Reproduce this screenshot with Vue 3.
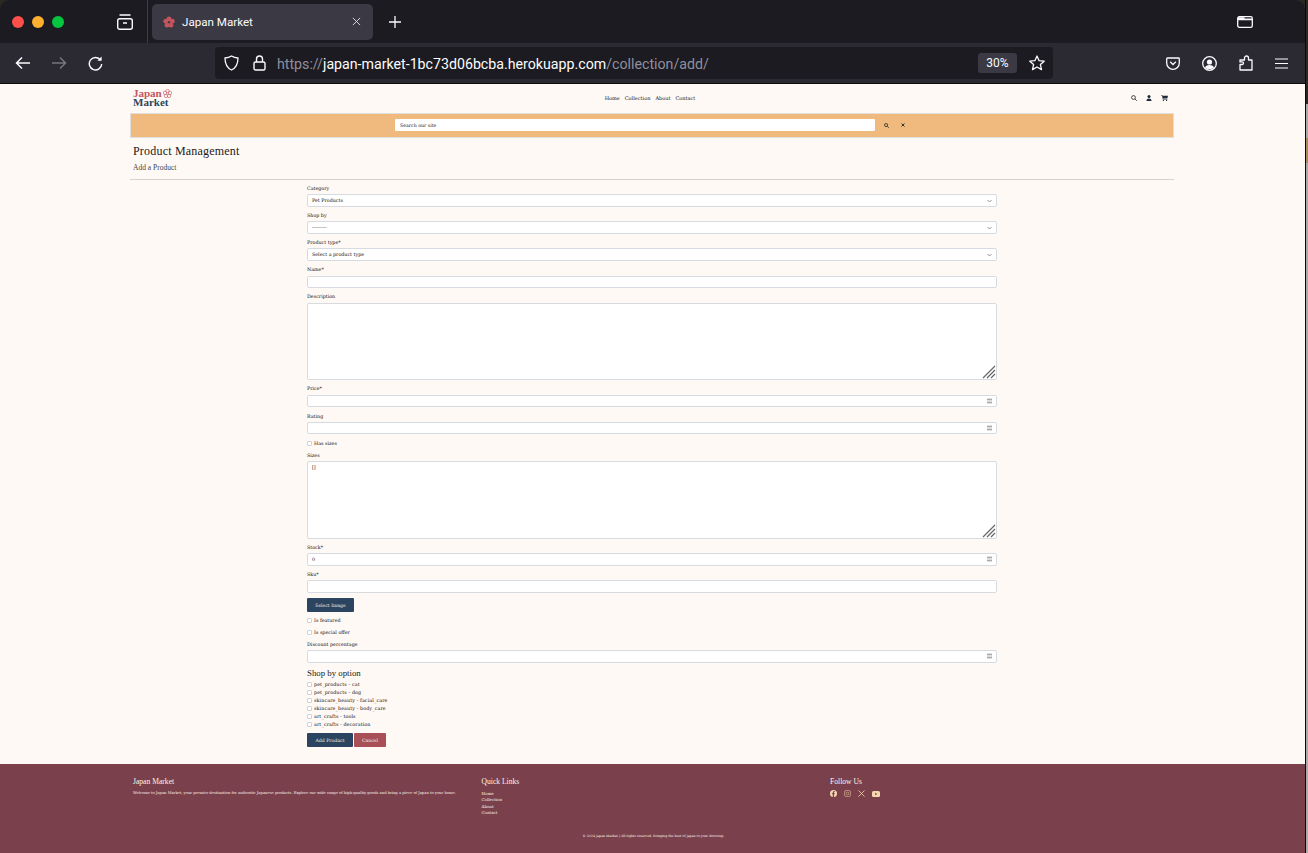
<script setup>
const selects = [
  { label: 'Category', value: 'Pet Products' },
  { label: 'Shop by', value: '---------' },
  { label: 'Product type*', value: 'Select a product type' },
]
const shopOptions = [
  'pet_products - cat',
  'pet_products - dog',
  'skincare_beauty - facial_care',
  'skincare_beauty - body_care',
  'art_crafts - tools',
  'art_crafts - decoration',
]
const navLinks = ['Home', 'Collection', 'About', 'Contact']
</script>

<template>
  <div class="desk">
    <div class="window">
      <header class="browser">
        <div class="tabbar">
          <div class="lights">
            <span class="light red" />
            <span class="light yellow" />
            <span class="light green" />
          </div>
          <svg class="ff-view" width="16" height="16" viewBox="0 0 16 16" fill="none" stroke="#fbfbfe" stroke-width="1.4">
            <rect x="0.7" y="4.7" width="14.6" height="10.6" rx="2" />
            <path d="M2.5 1h11M6 9h4" />
          </svg>
          <span class="tab-sep" />
          <div class="tab">
            <svg class="favicon" width="12" height="12" viewBox="0 0 12 12" fill="#c4555e">
              <circle cx="6" cy="2.8" r="2.4" />
              <circle cx="2.7" cy="5.2" r="2.4" />
              <circle cx="9.3" cy="5.2" r="2.4" />
              <circle cx="4" cy="9.2" r="2.4" />
              <circle cx="8" cy="9.2" r="2.4" />
            </svg>
            <span class="tab-title">Japan Market</span>
            <svg class="tab-close" width="9" height="9" viewBox="0 0 10 10" stroke="#e4e4ea" stroke-width="1">
              <path d="M1 1l8 8M9 1l-8 8" />
            </svg>
          </div>
          <svg class="new-tab" width="12" height="12" viewBox="0 0 12 12" stroke="#fbfbfe" stroke-width="1.3">
            <path d="M6 0v12M0 6h12" />
          </svg>
          <svg class="tab-list" width="16" height="12" viewBox="0 0 16 12" fill="none" stroke="#fbfbfe" stroke-width="1.3">
            <rect x="0.7" y="0.7" width="14.6" height="10.6" rx="1.6" />
            <path d="M1 2h6.5M1 3.4h14" stroke-width="1.6" />
          </svg>
        </div>
        <div class="toolbar">
          <svg class="tool-back" width="16" height="14" viewBox="0 0 16 14" fill="none" stroke="#fbfbfe" stroke-width="1.5">
            <path d="M15 7H1.5M7 1.5L1.5 7 7 12.5" />
          </svg>
          <svg class="tool-forward" width="16" height="14" viewBox="0 0 16 14" fill="none" stroke="#77767d" stroke-width="1.5">
            <path d="M1 7h13.5M9 1.5L14.5 7 9 12.5" />
          </svg>
          <svg class="tool-reload" width="15" height="15" viewBox="0 0 15 15" fill="none" stroke="#fbfbfe" stroke-width="1.4">
            <path d="M12.6 4.2A6.2 6.2 0 1 0 13.7 8" />
            <path d="M13.6 0.6v4.2H9.4" fill="#fbfbfe" stroke="none" />
          </svg>
          <div class="urlbar">
            <svg class="url-shield" width="15" height="16" viewBox="0 0 15 16" fill="none" stroke="#fbfbfe" stroke-width="1.3">
              <path d="M7.5 1C5.5 2.3 3.2 2.9 1 3c0 5 1 9.4 6.5 12C13 12.4 14 8 14 3c-2.2-.1-4.5-.7-6.5-2z" />
            </svg>
            <svg class="url-lock" width="13" height="16" viewBox="0 0 13 16" fill="none" stroke="#fbfbfe" stroke-width="1.4">
              <rect x="1" y="7" width="11" height="8" rx="1.5" />
              <path d="M3.5 7V4a3 3 0 0 1 6 0v3" />
            </svg>
            <span class="url-text"><span class="dim">https://</span>japan-market-1bc73d06bcba.herokuapp.com<span class="dim">/collection/add/</span></span>
            <span class="zoom-badge">30%</span>
            <svg class="url-star" width="16" height="16" viewBox="0 0 16 16" fill="none" stroke="#fbfbfe" stroke-width="1.3" stroke-linejoin="round">
              <path d="M8 1l2.1 4.7 5.1.5-3.8 3.4 1.1 5L8 12l-4.500 2.6 1.1-5L.8 6.200l5.100-.5z" />
            </svg>
          </div>
          <div class="tool-right">
            <svg width="14" height="13" viewBox="0 0 14 13" fill="none" stroke="#fbfbfe" stroke-width="1.3">
              <path d="M1.5 1h11c.4 0 .8.4.8.8V6a6.300 6.300 0 0 1-12.600 0V1.800c0-.4.400-.8.800-.8z" />
              <path d="M4.200 4.800L7 7.500l2.800-2.700" />
            </svg>
            <svg width="15" height="15" viewBox="0 0 15 15" fill="none" stroke="#fbfbfe" stroke-width="1.3">
              <circle cx="7.5" cy="7.5" r="6.8" />
              <circle cx="7.5" cy="6" r="2.6" fill="#fbfbfe" stroke="none" />
              <path d="M3 11.500c1-1.800 2.500-2.500 4.500-2.500s3.500.7 4.500 2.500c-1.200 1.200-2.700 1.800-4.500 1.800S4.200 12.700 3 11.500z" fill="#fbfbfe" stroke="none" />
            </svg>
            <svg width="14" height="16" viewBox="0 0 14 16" fill="none" stroke="#fbfbfe" stroke-width="1.3" stroke-linejoin="round">
              <path d="M1 15V9.500h2.200a1.300 1.300 0 1 0 0-2.600H1V5h4.500V3a2 2 0 0 1 4 0v2H13v10z" />
            </svg>
            <svg width="13" height="11" viewBox="0 0 13 11" stroke="#fbfbfe" stroke-width="1.2">
              <path d="M0 1h13M0 5.500h13M0 10h13" />
            </svg>
          </div>
        </div>
      </header>

      <main class="page">
        <div class="container">
          <nav class="site-nav">
            <div class="logo">
              <div class="logo-top">
                <span>Japan</span>
                <svg width="9" height="9" viewBox="0 0 12 12" fill="none" stroke="#c4555e" stroke-width="0.8">
                  <circle cx="6" cy="2.8" r="2.3" />
                  <circle cx="2.7" cy="5.2" r="2.3" />
                  <circle cx="9.3" cy="5.2" r="2.3" />
                  <circle cx="4" cy="9.2" r="2.3" />
                  <circle cx="8" cy="9.2" r="2.3" />
                </svg>
              </div>
              <div class="logo-bottom">Market</div>
            </div>
            <ul class="nav-links">
              <li v-for="link in navLinks" :key="link">{{ link }}</li>
            </ul>
            <div class="nav-icons">
              <svg width="6" height="6" viewBox="0 0 6 6" fill="none" stroke="#333" stroke-width="0.9">
                <circle cx="2.5" cy="2.5" r="1.9" />
                <path d="M3.9 3.9L5.8 5.8" />
              </svg>
              <svg width="6" height="6" viewBox="0 0 6 6" fill="#1f2a37">
                <circle cx="3" cy="1.6" r="1.5" />
                <path d="M0.4 6c0-1.6 1.1-2.5 2.6-2.5S5.6 4.4 5.6 6z" />
              </svg>
              <svg width="7" height="6" viewBox="0 0 7 6" fill="#1f2a37">
                <path d="M0 0h1.3l.2.7H7l-.7 2.8H2.2l.1.6h4v.5H1.800L1 .5H0z" />
                <circle cx="2.4" cy="5.4" r="0.6" />
                <circle cx="5.6" cy="5.4" r="0.6" />
              </svg>
            </div>
          </nav>

          <div class="search-band">
            <input class="search-input" placeholder="Search our site" />
            <svg class="band-icon" width="5" height="5" viewBox="0 0 6 6" fill="none" stroke="#333" stroke-width="1">
              <circle cx="2.5" cy="2.5" r="1.9" />
              <path d="M3.9 3.9L5.8 5.8" />
            </svg>
            <svg class="band-close" width="4" height="4" viewBox="0 0 4 4" stroke="#333" stroke-width="1">
              <path d="M.5.5l3 3M3.5.5l-3 3" />
            </svg>
          </div>

          <section class="heading">
            <h1>Product Management</h1>
            <h2>Add a Product</h2>
          </section>
          <hr class="rule" />

          <form class="product-form" @submit.prevent>
            <div v-for="s in selects" :key="s.label" class="field">
              <label>{{ s.label }}</label>
              <div class="select-box">
                <span>{{ s.value }}</span>
                <svg width="5" height="4" viewBox="0 0 5 4" fill="none" stroke="#666" stroke-width="0.7">
                  <path d="M.5 1l2 2 2-2" />
                </svg>
              </div>
            </div>

            <div class="field gap3">
              <label>Name*</label>
              <input class="text-input" type="text" />
            </div>

            <div class="field gap3">
              <label>Description</label>
              <div class="area-wrap">
                <textarea class="text-area" />
                <svg class="grip" width="14" height="14" viewBox="0 0 14 14" stroke="#666" stroke-width="1.2">
                  <path d="M1 13L13 1M5 13l8-8M9 13l4-4" />
                </svg>
              </div>
            </div>

            <div class="field gap3 wide-after">
              <label>Price*</label>
              <div class="num-wrap"><input class="text-input" type="text" /><span class="spin" /></div>
            </div>

            <div class="field">
              <label>Rating</label>
              <div class="num-wrap"><input class="text-input" type="text" /><span class="spin" /></div>
            </div>

            <label class="check check-sizes"><span class="box" />Has sizes</label>

            <div class="field">
              <label>Sizes</label>
              <div class="area-wrap">
                <textarea class="text-area sizes">[]</textarea>
                <svg class="grip" width="14" height="14" viewBox="0 0 14 14" stroke="#666" stroke-width="1.2">
                  <path d="M1 13L13 1M5 13l8-8M9 13l4-4" />
                </svg>
              </div>
            </div>

            <div class="field">
              <label>Stock*</label>
              <div class="num-wrap"><input class="text-input tall" type="text" value="0" /><span class="spin" /></div>
            </div>

            <div class="field">
              <label>Sku*</label>
              <input class="text-input tall" type="text" />
            </div>

            <button type="button" class="btn btn-navy btn-image">Select Image</button>

            <label class="check check-feat"><span class="box" />Is featured</label>
            <label class="check check-offer"><span class="box" />Is special offer</label>

            <div class="field field-discount">
              <label>Discount percentage</label>
              <div class="num-wrap"><input class="text-input tall" type="text" /><span class="spin" /></div>
            </div>

            <h3 class="options-title">Shop by option</h3>
            <div class="options">
              <label v-for="o in shopOptions" :key="o" class="check"><span class="box" />{{ o }}</label>
            </div>

            <div class="actions">
              <button type="button" class="btn btn-navy btn-add">Add Product</button>
              <button type="button" class="btn btn-cancel">Cancel</button>
            </div>
          </form>
        </div>

        <footer class="site-footer">
          <div class="footer-cols">
            <div class="col">
              <h4>Japan Market</h4>
              <p>Welcome to Japan Market, your premier destination for authentic Japanese products. Explore our wide range of high-quality goods and bring a piece of Japan to your home.</p>
            </div>
            <div class="col">
              <h4>Quick Links</h4>
              <ul>
                <li>Home</li>
                <li>Collection</li>
                <li>About</li>
                <li>Contact</li>
              </ul>
            </div>
            <div class="col">
              <h4>Follow Us</h4>
              <div class="socials">
                <svg width="7" height="7" viewBox="0 0 8 8">
                  <circle cx="4" cy="4" r="4" fill="#f6d9b0" />
                  <path d="M4.5 8V4.8h1l.2-1.2H4.500V3c0-.4.200-.6.600-.6h.6V1.400C5.400 1.300 5 1.300 4.700 1.300c-1 0-1.500.6-1.500 1.500v.8h-1v1.200h1V8z" fill="#7a404b" />
                </svg>
                <svg width="7" height="7" viewBox="0 0 8 8" fill="none" stroke="#d9b394" stroke-width="0.8">
                  <rect x="0.5" y="0.5" width="7" height="7" rx="2" />
                  <circle cx="4" cy="4" r="1.6" />
                </svg>
                <svg width="7" height="7" viewBox="0 0 8 8" fill="none" stroke="#f6d9b0" stroke-width="0.9">
                  <path d="M.5.5l7 7M7.5.5l-7 7" />
                </svg>
                <svg width="8" height="6" viewBox="0 0 8 6">
                  <rect width="8" height="6" rx="1.5" fill="#f6d9b0" />
                  <path d="M3.2 1.7L5.3 3 3.2 4.3z" fill="#7a404b" />
                </svg>
              </div>
            </div>
          </div>
          <p class="copyright">© 2024 Japan Market | All rights reserved. Bringing the best of Japan to your doorstep.</p>
        </footer>
      </main>
    </div>
  </div>
</template>

<style>
html, body {
  margin: 0;
  background: #aaa;
}
</style>

<style scoped>
.desk {
  width: 1308px;
  height: 853px;
  overflow: hidden;
  background: linear-gradient(#2a2820 0 104px, #a8a8a8 104px 138px, #a88a58 138px 163px, #aaa 163px);
}
.window {
  width: 1305px;
  height: 853px;
  border-right: 1px solid #0a0a0a;
  font-family: "DejaVu Serif", serif;
}

/* browser chrome */
.browser { height: 84px; font-family: "Roboto", "Liberation Sans", sans-serif; }
.tabbar {
  height: 43px; display: flex; align-items: center;
  background: #1c1b22; border-radius: 10px 10px 0 0;
}
.lights { display: flex; gap: 8px; margin-left: 12px; }
.light { width: 12px; height: 12px; border-radius: 50%; }
.red { background: #ff4f4b; }
.yellow { background: #ffb02e; }
.green { background: #04c63f; }
.ff-view { margin-left: 53px; }
.tab-sep { width: 1px; height: 43px; background: #3f3e46; margin-left: 14px; }
.tab {
  width: 221px; height: 36px; margin-left: 4px; padding: 0 12px 0 11px;
  box-sizing: border-box; background: #3a3944; border-radius: 5px;
  display: flex; align-items: center; color: #fbfbfe; font-size: 11.6px;
}
.tab-title { margin-left: 7px; flex: 1; }
.new-tab { margin-left: 16px; }
.tab-list { margin-left: auto; margin-right: 52px; }
.toolbar {
  height: 40px; display: flex; align-items: center;
  background: #2b2a33; border-bottom: 1px solid #0c0c0d;
}
.tool-back { margin-left: 15px; }
.tool-forward { margin-left: 20px; }
.tool-reload { margin-left: 21px; }
.urlbar {
  width: 838px; height: 32px; margin-left: 112px; border-radius: 4px; background: #1c1b22;
  display: flex; align-items: center;
}
.url-shield { margin-left: 9px; }
.url-lock { margin-left: 14px; }
.url-text { margin: 2px 0 0 11px; font-size: 14.2px; color: #fbfbfe; white-space: nowrap; flex: 1; }
.dim { color: #8f8f9d; }
.zoom-badge {
  width: 39px; height: 20px; line-height: 20px; text-align: center;
  background: #3a3944; border-radius: 3px; color: #fbfbfe; font-size: 12px;
}
.url-star { margin-left: 12px; margin-right: 8px; }
.tool-right { display: flex; align-items: center; margin-left: 113px; gap: 22px; }

/* page */
.page {
  height: 769px; background: #fff9f5;
  display: flex; flex-direction: column;
  opacity: .999;
}
.container { height: 680px; padding: 0 131px 0 130px; box-sizing: border-box; flex-shrink: 0; }
.site-nav {
  height: 29px; box-sizing: border-box; padding: 0 6px 1px 3px;
  display: flex; align-items: center; justify-content: space-between;
}
.logo { width: 40px; font-family: "Liberation Serif", serif; font-weight: 700; line-height: 9.5px; font-size: 11px; }
.logo-top { color: #c4555e; display: flex; align-items: center; gap: 1px; }
.logo-bottom { color: #2b4560; }
.nav-links {
  list-style: none; margin: 0 0 0 -4px; padding: 0; display: flex; gap: 5px;
  font-size: 5px; color: #111;
}
.nav-icons { display: flex; align-items: center; gap: 9px; }
.search-band {
  height: 25px; box-sizing: border-box; background: #f0b97d;
  border: 1px solid #e1dfdc; display: flex; align-items: center;
  padding: 0 0 1px 264px;
}
.search-input {
  width: 480px; height: 12px; box-sizing: border-box; border: 0; border-radius: 1px;
  background: #fff; padding: 0 5px; font: 4.7px "DejaVu Serif", serif;
  outline: none;
}
.search-input::placeholder { color: #222; opacity: 1; }
.band-icon { margin-left: 9px; }
.band-close { margin-left: 12px; }

.heading { height: 41px; padding: 7px 0 0 3px; box-sizing: border-box; font-family: "Liberation Serif", serif; }
h1 { margin: 0; font-size: 12px; font-weight: 400; line-height: 13px; color: #1a1a1a; letter-spacing: .2px; }
h2 { margin: 6px 0 0; font-size: 7.5px; font-weight: 400; line-height: 8px; color: #444; }
.rule { margin: 0; border: 0; border-top: 1px solid #d5d3d1; }

.product-form { width: 690px; margin: 0 auto; padding-top: 5px; }
.field { display: flex; flex-direction: column; margin-bottom: 5px; }
.field label { font-size: 4.8px; line-height: 7px; margin-bottom: 2px; color: #111; }
.field.gap3 label { margin-bottom: 3px; }
.field.wide-after { margin-bottom: 6px; }
.select-box {
  height: 13px; box-sizing: border-box; background: #fff; border: 1px solid #d6dbe2;
  border-radius: 2px; padding: 0 4px; display: flex; align-items: center;
  justify-content: space-between; font-size: 4.8px; color: #111;
}
.text-input {
  display: block; width: 100%; height: 12px; box-sizing: border-box; margin: 0; background: #fff;
  border: 1px solid #d6dbe2; border-radius: 2px; padding: 0 4px;
  font: 4.8px "DejaVu Serif", serif; color: #111; outline: none;
}
.text-input.tall { height: 13px; }
.area-wrap, .num-wrap { position: relative; }
.text-area {
  display: block; width: 100%; height: 77px; box-sizing: border-box; margin: 0; resize: none;
  background: #fff; border: 1px solid #d6dbe2; border-radius: 2px; padding: 3px 4px;
  font: 4.8px "DejaVu Serif", serif; color: #111; outline: none;
}
.text-area.sizes { height: 78px; }
.grip { position: absolute; right: 1px; bottom: 1px; }
.spin {
  position: absolute; right: 5px; top: 3px; width: 5px; height: 6px;
  background: linear-gradient(#ddd 0 1px, #aaa 1px 2px, #ddd 2px 4px, #aaa 4px 5px, #ddd 5px);
}
.check { display: flex; align-items: center; gap: 2px; font-size: 4.8px; line-height: 7px; color: #111; }
.box {
  width: 3px; height: 3px; background: #fff; border: 1px solid #cfd3d9; border-radius: 1px; flex-shrink: 0;
}
.check-sizes { margin: 6px 0 5px; }
.btn {
  height: 14px; border: 0; border-radius: 1px; color: #f5efe8; padding: 0;
  font: 4.6px "DejaVu Serif", serif;
}
.btn-navy { background: #2b4560; }
.btn-image { display: block; width: 47px; }
.check-feat { margin-top: 5px; }
.check-offer { margin-top: 5px; }
.field-discount { margin-top: 5px; margin-bottom: 0; }
.options-title { margin: 6px 0 3px; font: 400 8.8px/9px "Liberation Serif", serif; color: #1a1a1a; }
.options { display: flex; flex-direction: column; gap: 1px; letter-spacing: .1px; }
.actions { display: flex; gap: 1px; margin-top: 5px; }
.btn-add { width: 46px; }
.btn-cancel { width: 32px; background: #a94f58; }

/* footer */
.site-footer {
  flex: 1; background: #7a404b; color: #fdf4ea; padding: 14px 131px 0 133px; box-sizing: border-box;
}
.footer-cols { display: flex; height: 55px; }
.col { width: 348.5px; flex-shrink: 0; }
h4 { margin: 0; font: 400 7.6px/8px "Liberation Serif", serif; }
.col p { margin: 4px 0 0; font-size: 3.7px; line-height: 6px; white-space: nowrap; }
.col ul { list-style: none; margin: 5px 0 0; padding: 0; font-size: 4px; line-height: 6.3px; }
.socials { display: flex; align-items: center; gap: 7px; margin-top: 4px; }
.copyright { margin: 0; text-align: center; font-size: 3.2px; line-height: 6px; }
</style>
